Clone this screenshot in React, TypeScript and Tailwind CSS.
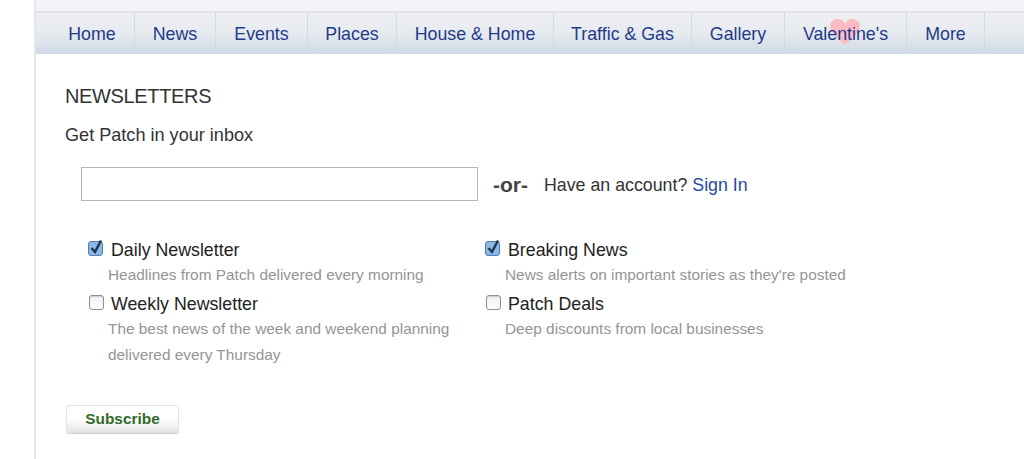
const tabs = [
  { label: 'Home', width: 'w-[99px] pl-[14px]' },
  { label: 'News', width: 'w-[81px]' },
  { label: 'Events', width: 'w-[92px]' },
  { label: 'Places', width: 'w-[89px]' },
  { label: 'House & Home', width: 'w-[157px]' },
  { label: 'Traffic & Gas', width: 'w-[138px]' },
  { label: 'Gallery', width: 'w-[93px]' },
  { label: "Valentine's", width: 'w-[122px]' },
  { label: 'More', width: 'w-[78px]' },
];

function CheckBox({ checked }: { checked?: boolean }) {
  if (!checked) {
    return (
      <span className="-mt-[2px] w-[15px] h-[15px] rounded-[3px] border border-[#8f8f8f] bg-gradient-to-b from-[#f0f0f0] to-white shadow-[inset_0_1px_1px_#ccc]" />
    );
  }
  return (
    <svg width="16" height="17" viewBox="0 0 16 17" className="-mt-[5px]">
      <rect x="0.5" y="2.5" width="14" height="14" rx="2.5" fill="#8db8e3" stroke="#4b7fb5" />
      <path d="M3.5 9 L7 13 L13 1.5" fill="none" stroke="#1c3550" strokeWidth="2.4" />
    </svg>
  );
}

function Option({
  title,
  lines,
  checked,
}: {
  title: string;
  lines: string[];
  checked?: boolean;
}) {
  return (
    <div className="mb-[3px]">
      <div className="flex items-center h-[25px] pl-[7px] gap-[7px] text-[17.8px] text-[#222]">
        <span className="w-[16px] flex justify-center">
          <CheckBox checked={checked} />
        </span>
        <span className="pt-[2px]">{title}</span>
      </div>
      <div className="pl-[27px] text-[15.4px] leading-[26px] text-[#959595]">
        {lines.map((line) => (
          <div key={line}>{line}</div>
        ))}
      </div>
    </div>
  );
}

export default function App() {
  return (
    <div className="w-[1024px] h-[459px] overflow-hidden bg-white font-['Liberation_Sans',Arial,sans-serif]">
      <div className="ml-[34px] h-full border-l-2 border-[#e6e7ea]">
        <div className="h-[13px] bg-[#f3f4f8] border-b-2 border-[#dfe1e5]" />
        <nav className="flex h-[41px] bg-gradient-to-b from-[#eff0f2] via-[#e6eaef] to-[#cfdae7]">
          {tabs.map((tab) => (
            <a
              key={tab.label}
              className={`${tab.width} relative flex items-center justify-center pt-[2px] border-r border-[#d5dae0] text-[17.8px] text-[#1f3a8a]`}
            >
              {tab.label === "Valentine's" && (
                <svg
                  width="32"
                  height="28"
                  viewBox="0 0 32 28"
                  className="absolute left-[44px] top-[5px]"
                >
                  <path
                    d="M16 27 C10 21 1 15 1 8 C1 3 5 1 9 1 C12 1 15 3 16 6 C17 3 20 1 23 1 C27 1 31 3 31 8 C31 15 22 21 16 27 Z"
                    fill="#fbbcc3"
                  />
                </svg>
              )}
              <span className="relative">{tab.label}</span>
            </a>
          ))}
        </nav>
        <div className="pl-[29px] pt-[29px]">
          <h2 className="text-[20px] leading-[26px] tracking-[-0.35px] text-[#333]">NEWSLETTERS</h2>
          <p className="mt-[13px] text-[18.1px] leading-[26px] text-[#333]">Get Patch in your inbox</p>
          <div className="mt-[19px] ml-[16px] flex items-center h-[34px]">
            <input className="w-[397px] h-[34px] border border-[#b5b5b5] bg-white" />
            <span className="ml-[15px] pt-[1px] text-[21px] font-bold text-[#444]">-or-</span>
            <span className="ml-[16px] pt-[2px] text-[17.8px] text-[#333]">
              Have an account? <a className="text-[#1f4aa0]">Sign In</a>
            </span>
          </div>
          <div className="mt-[36px] flex pl-[16px]">
            <div className="w-[397px] flex flex-col">
              <Option checked title="Daily Newsletter" lines={['Headlines from Patch delivered every morning']} />
              <Option
                title="Weekly Newsletter"
                lines={['The best news of the week and weekend planning', 'delivered every Thursday']}
              />
            </div>
            <div className="flex flex-col">
              <Option checked title="Breaking News" lines={["News alerts on important stories as they're posted"]} />
              <Option title="Patch Deals" lines={['Deep discounts from local businesses']} />
            </div>
          </div>
          <button className="mt-[34px] ml-[1px] w-[113px] h-[28px] rounded-[3px] border border-[#e2e2e2] bg-gradient-to-b from-white via-white to-[#e4e4e4] shadow-[0_1px_1px_#ccc] text-[15.4px] font-bold text-[#2f6b2a]">
            Subscribe
          </button>
        </div>
      </div>
    </div>
  );
}
